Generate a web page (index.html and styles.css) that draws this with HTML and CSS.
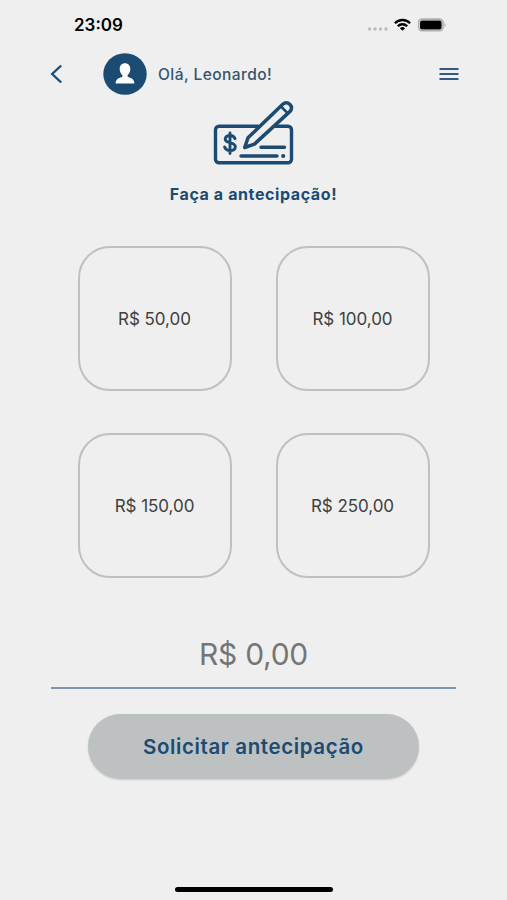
FILE: index.html
```html
<!DOCTYPE html>
<html lang="pt-BR">
<head>
  <meta charset="UTF-8" />
  <meta name="viewport" content="width=device-width, initial-scale=1.0"/>
  <title>Antecipação</title>
  <link rel="stylesheet" href="styles.css">
</head>
<body>
  <div class="status-bar">
    <span class="time">23:09</span>
    <svg class="status-icons" width="80" height="16" viewBox="0 0 80 16">
      <g fill="#bcbcbc">
        <circle cx="2.5" cy="12" r="1.7"/>
        <circle cx="8" cy="12" r="1.7"/>
        <circle cx="13.5" cy="12" r="1.7"/>
        <circle cx="19" cy="12" r="1.7"/>
      </g>
      <g fill="none" stroke="#000" stroke-width="2.3">
        <path d="M27.900 6.200a10.600 10.600 0 0 1 15.200 0"/>
        <path d="M30.800 9.200a6.600 6.600 0 0 1 9.400 0"/>
      </g>
      <path d="M32.900 11.200a3.800 3.800 0 0 1 5.200 0l-2.600 2.600z"/>
      <rect x="51.600" y="2.100" width="24.400" height="11.600" rx="3.400" fill="none" stroke="#b0b0b0" stroke-width="1.600"/>
      <rect x="53" y="3.600" width="21.600" height="8.800" rx="2"/>
      <path d="M77.400 6v4c1.600-.6 1.600-3.400 0-4z" fill="#b0b0b0"/>
    </svg>
  </div>

  <header class="header">
    <button class="icon-button" aria-label="Voltar">
      <svg width="14" height="20" viewBox="0 0 14 20"><path d="M11.200 1.500L2.200 10l9 8.500" fill="none" stroke="#1b4f7a" stroke-width="2.400"/></svg>
    </button>
    <svg class="avatar" width="44" height="42" viewBox="0 0 44 42">
      <ellipse cx="22" cy="21" rx="21.700" ry="20.800" fill="#1b4b72"/>
      <path d="M22 10.300c-3.300 0-5.300 2.300-5.300 5.600 0 2.600 1.100 4.900 2.700 6.200v1.600c-3.400 1.100-6.800 2.200-6.800 6.800h18.800c0-4.600-3.400-5.700-6.800-6.800v-1.600c1.600-1.300 2.700-3.600 2.700-6.200 0-3.300-2-5.600-5.300-5.600z" fill="#fff"/>
    </svg>
    <span class="greeting">Olá, Leonardo!</span>
    <button class="icon-button menu" aria-label="Menu">
      <svg width="20" height="14" viewBox="0 0 20 14"><path d="M.5 2h19M.5 7h19M.5 12h19" stroke="#34587f" stroke-width="2"/></svg>
    </button>
  </header>

  <main class="content">
    <svg class="cheque" width="82" height="66" viewBox="1 0 82 66">
      <g fill="none" stroke="#1b4b72" stroke-width="3.400" stroke-linecap="round" stroke-linejoin="round">
        <path d="M46 26.200H7a3.500 3.500 0 0 0-3.500 3.500v29.500A3.500 3.500 0 0 0 7 62.700h69a3.500 3.500 0 0 0 3.500-3.500V29.700a3.500 3.500 0 0 0-3.500-3.500H63"/>
        <path d="M49 47.300h23.500M29 56h36"/>
        <path d="M71 56h.4" stroke-width="3.800"/>
        <path d="M32.700 47.500l3.300-9.700L71 4.100a4.600 4.600 0 0 1 6.600 0l.6.700a4.600 4.600 0 0 1-.2 6.600L42.400 44.100z" stroke-width="3.500"/>
        <path d="M69.500 7l5.800 5.800" stroke-width="2.600"/>
        <path d="M23 38.600c-.9-2.300-2.700-3.100-5-3.100-2.900 0-4.800 1.400-4.800 3.600 0 5.200 10.100 2.300 10.100 7.600 0 2.400-2.100 3.800-5.200 3.800-2.700 0-4.700-1.100-5.500-3.500M18 33v20.500" stroke-width="2.900"/>
      </g>
    </svg>
    <h1 class="title">Faça a antecipação!</h1>

    <div class="options">
      <button class="option">R$ 50,00</button>
      <button class="option">R$ 100,00</button>
      <button class="option">R$ 150,00</button>
      <button class="option">R$ 250,00</button>
    </div>

    <div class="amount">R$ 0,00</div>
    <button class="submit">Solicitar antecipação</button>
  </main>

  <div class="home-indicator"></div>
</body>
</html>
```
FILE: styles.css
```css
* { box-sizing: border-box; }
body {
  font-family: Inter, "Liberation Sans", sans-serif;
  background: #efefef;
  color: #404040;
  margin: 0;
  height: 900px;
  display: flex;
  flex-direction: column;
  overflow: hidden;
}
button {
  font-family: inherit;
  background: none;
  border: none;
  padding: 0;
  cursor: pointer;
}
svg {
  display: block;
}
.status-bar {
  height: 50px;
  padding: 0 60px 0 74px;
  display: flex;
  align-items: center;
  justify-content: space-between;
}
.time {
  color: #000;
  font-size: 17px;
  font-weight: 600;
}
.status-icons {
  margin-bottom: 1px;
}
.header {
  height: 48px;
  padding: 0 48px 0 50px;
  display: flex;
  align-items: center;
}
.avatar {
  margin-left: 39px;
}
.greeting {
  margin-left: 11px;
  color: #34546f;
  font-size: 15.5px;
  font-weight: 500;
  white-space: nowrap;
  letter-spacing: 0.45px;
}
.menu {
  margin-left: auto;
}
.content {
  display: flex;
  flex-direction: column;
  align-items: center;
}
.cheque {
  margin-top: 2px;
}
.title {
  margin: 18px 0 0;
  color: #1b4b72;
  font-size: 16px;
  line-height: 20px;
  font-weight: 700;
  letter-spacing: 0.6px;
}
.options {
  display: grid;
  grid-template-columns: 154px 154px;
  grid-auto-rows: 145px;
  gap: 42px 44px;
  margin-top: 42px;
}
.option {
  border: 2px solid #bec1c1;
  border-radius: 32px;
  color: #404040;
  font-size: 17px;
  letter-spacing: -0.05px;
}
.amount {
  width: 405px;
  height: 69px;
  margin: 42px 0 25px;
  padding-top: 14px;
  border-bottom: 2px solid #7d95af;
  color: #757575;
  font-size: 30px;
  line-height: 40px;
  letter-spacing: -0.3px;
  text-align: center;
}
.submit {
  width: 331px;
  height: 65px;
  border-radius: 33px;
  background: #bdc1c1;
  box-shadow: 0 1px 2px rgba(0, 0, 0, 0.15);
  color: #1b4b72;
  font-size: 20.5px;
  font-weight: 600;
  letter-spacing: 0.6px;
}
.home-indicator {
  width: 158px;
  height: 5px;
  margin: auto auto 8px;
  border-radius: 3px;
  background: #000;
}
```
